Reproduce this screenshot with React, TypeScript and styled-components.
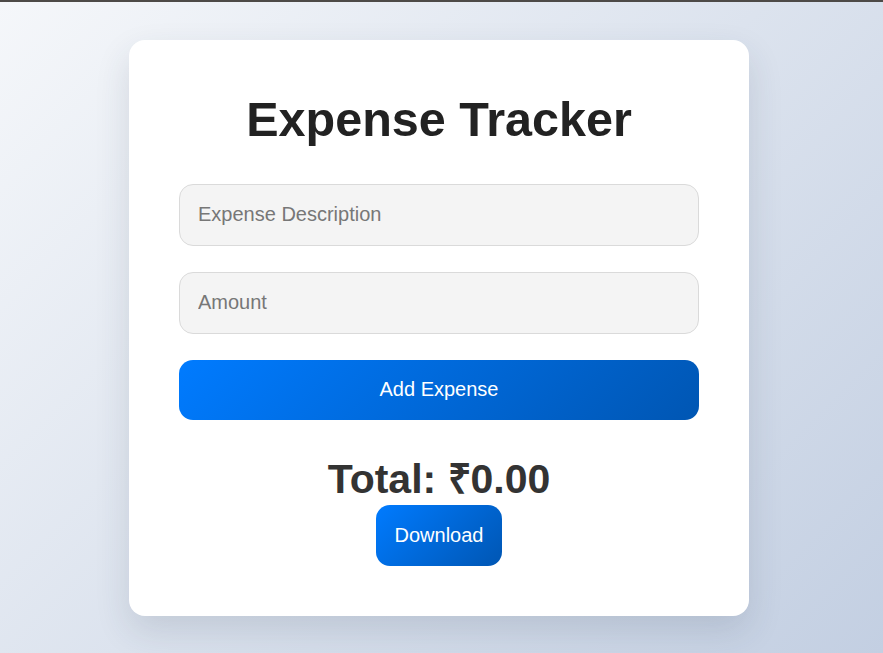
import * as React from "react";
import styled, { createGlobalStyle } from "styled-components";

const GlobalStyle = createGlobalStyle`
  html, body {
    margin: 0;
    padding: 0;
    height: 100%;
  }
  body {
    font-family: "Liberation Sans", Arial, sans-serif;
    background: linear-gradient(135deg, #f5f7fa 0%, #c3cfe2 100%);
    background-attachment: fixed;
  }
  * {
    box-sizing: border-box;
  }
`;

const TopEdge = styled.div`
  height: 2px;
  background: #4d4a47;
`;

const Page = styled.main`
  min-height: calc(100vh - 2px);
  display: flex;
  align-items: center;
  justify-content: center;
  padding-right: 5px;
`;

const Card = styled.section`
  width: 620px;
  padding: 50px;
  background: #fff;
  border-radius: 16px;
  box-shadow: 0 15px 35px rgba(40, 55, 80, 0.14);
  display: flex;
  flex-direction: column;
  align-items: center;
`;

const Title = styled.h1`
  margin: 2px 0 37px;
  font-size: 48.5px;
  line-height: 55px;
  font-weight: bold;
  color: #222;
  text-align: center;
`;

const Form = styled.form`
  width: 100%;
  display: flex;
  flex-direction: column;
  gap: 26px;
`;

const Input = styled.input`
  width: 100%;
  height: 62px;
  padding: 0 18px;
  font-family: inherit;
  font-size: 20px;
  color: #333;
  background: #f4f4f4;
  border: 1px solid #dadada;
  border-radius: 14px;
  outline: none;

  &::placeholder {
    color: #777;
  }
`;

const Button = styled.button<{ $block?: boolean }>`
  width: ${(p) => (p.$block ? "100%" : "auto")};
  height: ${(p) => (p.$block ? "60px" : "61px")};
  padding: 0 19px;
  font-family: inherit;
  font-size: 20px;
  color: #fff;
  border: none;
  border-radius: 14px;
  background: linear-gradient(135deg, #007bff 0%, #0056b3 100%);
  cursor: pointer;
`;

const Total = styled.h2`
  margin: 36px 0 2px;
  font-size: 41px;
  line-height: 47px;
  font-weight: bold;
  color: #333;
  text-align: center;
`;

export default function App() {
  const [desc, setDesc] = React.useState("");
  const [amount, setAmount] = React.useState("");
  const [total, setTotal] = React.useState(0);

  const add = (e: React.FormEvent) => {
    e.preventDefault();
    const value = parseFloat(amount);
    if (!desc || isNaN(value)) return;
    setTotal((t) => t + value);
    setDesc("");
    setAmount("");
  };

  return (
    <>
      <GlobalStyle />
      <TopEdge />
      <Page>
        <Card>
          <Title>Expense Tracker</Title>
          <Form onSubmit={add}>
            <Input
              placeholder="Expense Description"
              value={desc}
              onChange={(e) => setDesc(e.target.value)}
            />
            <Input
              type="number"
              placeholder="Amount"
              value={amount}
              onChange={(e) => setAmount(e.target.value)}
            />
            <Button $block type="submit">
              Add Expense
            </Button>
          </Form>
          <Total>Total: ₹{total.toFixed(2)}</Total>
          <Button type="button">Download</Button>
        </Card>
      </Page>
    </>
  );
}
